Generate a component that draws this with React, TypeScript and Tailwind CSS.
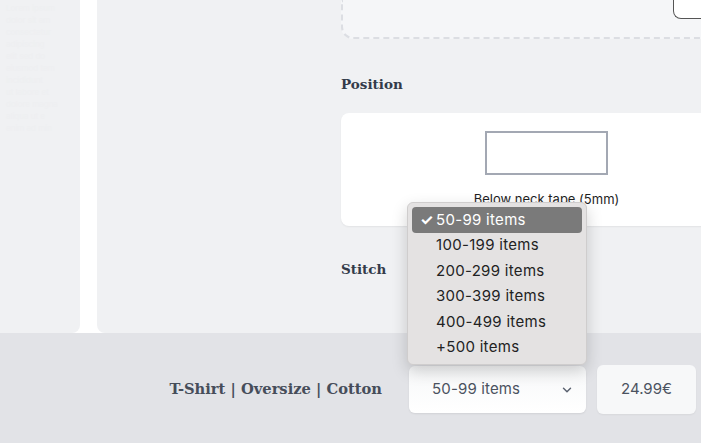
import { ChevronDown } from 'lucide-react';

const ranges = ['50-99 items', '100-199 items', '200-299 items', '300-399 items', '400-499 items', '+500 items'];

const slab = { fontFamily: '"DejaVu Serif", "Liberation Serif", serif' };
const ui = { fontFamily: 'Inter, "Liberation Sans", sans-serif' };

export default function App() {
  return (
    <div className="relative w-[701px] h-[443px] overflow-hidden bg-white flex flex-col" style={ui}>
      <div className="flex h-[333px] gap-[17px]">
        <div className="w-[80px] shrink-0 bg-[#f0f1f3] rounded-br-lg pl-[6px] pt-[4px] space-y-[3px] text-[8px] leading-[9px] text-[#eeeff1]">
          {['Lorem ipsum', 'dolor sit am', 'consectetur', 'adipiscing', 'elit sed do', 'eiusmod tem', 'incididunt', 'ut labore et', 'dolore magna', 'aliqua ut e', 'enim ad min'].map(t => (
            <div key={t}>{t}</div>
          ))}
        </div>
        <div className="flex-1 bg-[#f0f1f3] rounded-bl-lg overflow-hidden pl-[244px]">
          <div className="w-[460px]">
            <div className="h-[39px] border-x-2 border-b-2 border-dashed border-[#dcdee3] rounded-b-xl bg-[#f5f6f8]">
              <div className="ml-[330px] w-[100px] h-[19px] border-l-[1.5px] border-b-[1.5px] border-[#555] rounded-bl-lg bg-white" />
            </div>
            <h3 className="mt-[35px] text-[13.5px] leading-[20px] font-bold text-[#333b4a]" style={slab}>Position</h3>
            <div className="mt-[19px] w-[411px] h-[113px] bg-white rounded-lg shadow-[0_1px_2px_rgba(0,0,0,0.06)] flex flex-col items-center pt-[18px]">
              <div className="w-[123px] h-[44px] border-2 border-[#a3a8b3] bg-white" />
              <div className="mt-[16px] text-[13px] leading-[16px] text-[#1f1f1f]">Below neck tape (5mm)</div>
            </div>
            <h3 className="mt-[33px] text-[13.5px] leading-[20px] font-bold text-[#333b4a]" style={slab}>Stitch</h3>
          </div>
        </div>
      </div>

      <div className="flex-1 bg-[#e2e3e7] flex items-center justify-end pr-[5px] pt-[3px]">
        <span className="text-[14.7px] font-bold text-[#464d5a] mr-[27px]" style={slab}>T-Shirt | Oversize | Cotton</span>
        <div className="w-[177px] h-[47px] rounded-md bg-gradient-to-b from-[#f7f8f9] to-white shadow-[0_1px_2px_rgba(0,0,0,0.08)] flex items-center justify-between pl-[23px] pr-[12px] text-[15px] tracking-[0.01em] text-[#4b5260]">
          <span>50-99 items</span>
          <ChevronDown className="w-[14px] h-[14px] text-[#5b6270]" strokeWidth={2.5} />
        </div>
        <div className="ml-[11px] w-[99px] h-[49px] rounded-md bg-[#f7f8f9] shadow-[0_1px_2px_rgba(0,0,0,0.05)] flex items-center justify-center text-[15px] text-[#4b5260]">
          24.99€
        </div>
      </div>

      <div className="absolute left-[407px] top-[202px] w-[180px] rounded-[6px] bg-[#e4e2e2] border border-[#cfcdcd] shadow-[0_6px_16px_rgba(0,0,0,0.18)] p-[4px]">
        {ranges.map((r, i) => (
          <div
            key={r}
            className={
              i === 0
                ? 'h-[25.5px] rounded-[4px] bg-[#7a7a7a] text-white flex items-center pl-[8px] text-[15px] tracking-[0.02em]'
                : 'h-[25.5px] flex items-center pl-[24px] text-[15px] tracking-[0.02em] text-[#222]'
            }
          >
            {i === 0 && <span className="w-[16px] text-[15px] font-bold">✓</span>}
            {r}
          </div>
        ))}
      </div>
    </div>
  );
}
